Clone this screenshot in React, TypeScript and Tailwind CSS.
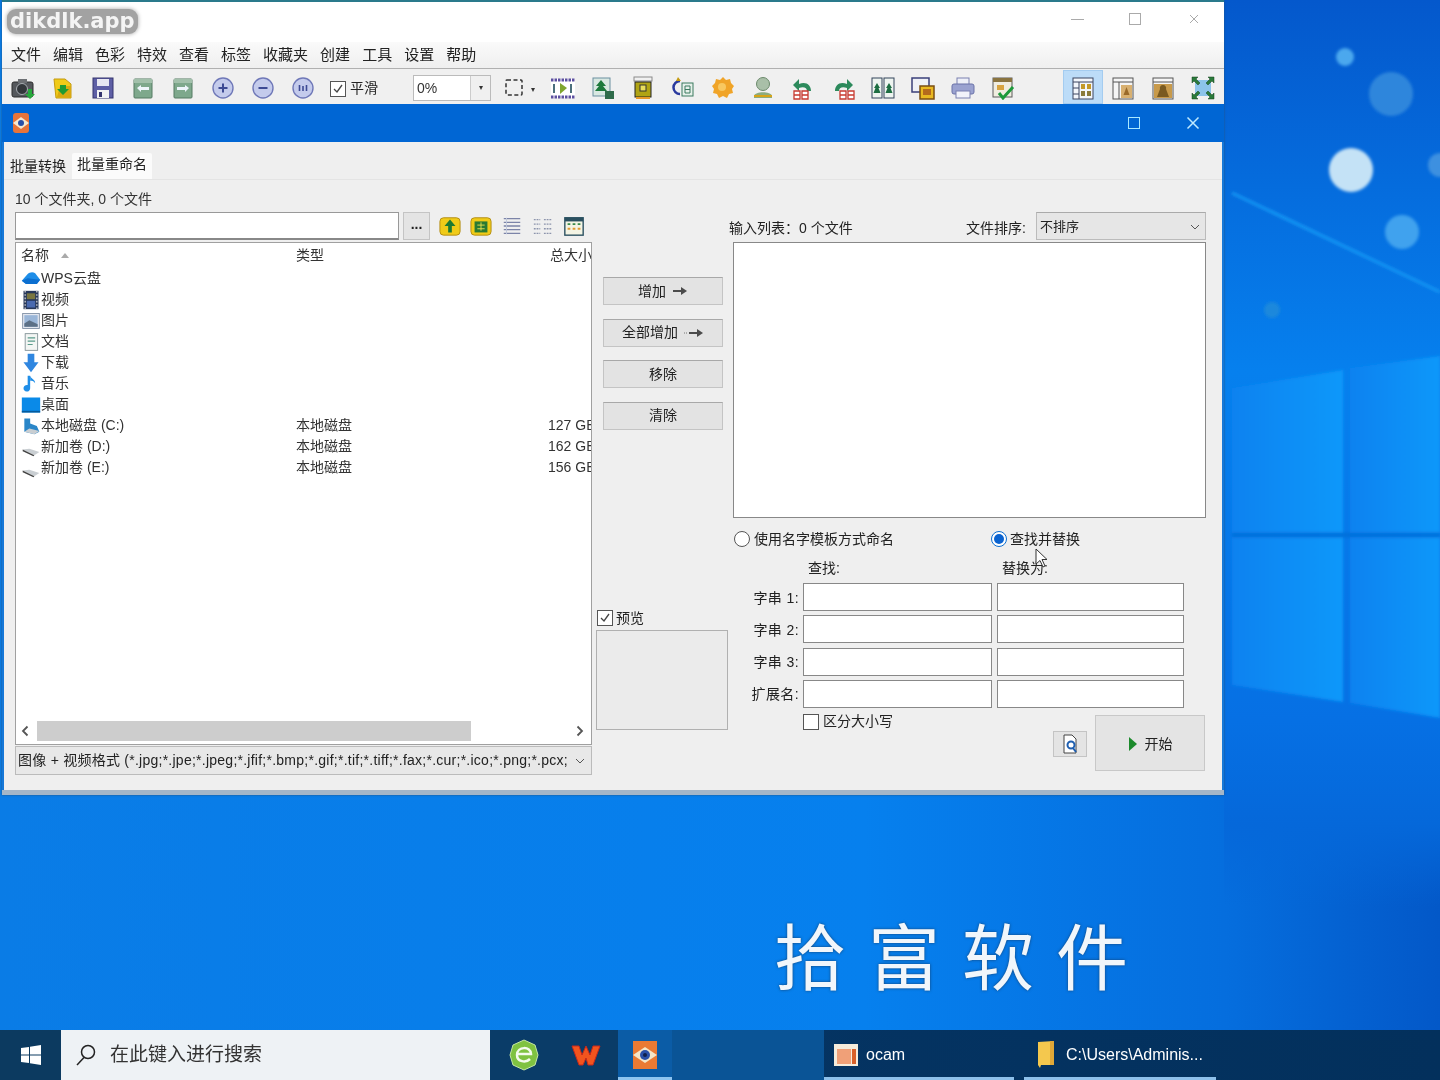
import type { ReactNode } from "react";

const cjk = "font-['Liberation_Sans','Noto_Sans_CJK_SC',sans-serif]";

function Ico({ children, size = 24 }: { children: ReactNode; size?: number }) {
  return (
    <svg width={size} height={size} viewBox="0 0 24 24" className="shrink-0">
      {children}
    </svg>
  );
}

const toolbarLeft: ReactNode[] = [
  <Ico key="cam">
    <rect x="1" y="6" width="21" height="15" rx="2" fill="#55585c" stroke="#2c2c2c" />
    <rect x="7" y="3" width="9" height="4" fill="#6d7074" />
    <circle cx="11" cy="13" r="5.500" fill="#33373b" stroke="#a8adb2" />
    <path d="M17 13h4v5h3l-5 5-5-5h3z" fill="#27a83c" />
  </Ico>,
  <Ico key="open">
    <path d="M3 3h11l6 5v14H5z" fill="#f0cb18" stroke="#c49a10" />
    <path d="M6 21l3-11h11v12z" fill="#d9a911" />
    <path d="M9 9h6v4h3l-6 6-6-6h3z" fill="#1f9b32" />
  </Ico>,
  <Ico key="save">
    <rect x="2" y="2" width="20" height="20" fill="#5e5fa5" stroke="#35356e" />
    <rect x="6" y="3" width="12" height="7" fill="#e8e8f2" />
    <rect x="6" y="14" width="12" height="8" fill="#f2f2f2" />
    <rect x="8" y="16" width="3" height="5" fill="#35356e" />
  </Ico>,
  <Ico key="prev">
    <rect x="3" y="3" width="18" height="19" rx="1" fill="#7ea88c" stroke="#557a63" />
    <rect x="3" y="3" width="18" height="4" fill="#a2c0ab" />
    <path d="M6 12l4-3v2h8v3h-8v2z" fill="#eef5fb" />
  </Ico>,
  <Ico key="next">
    <rect x="3" y="3" width="18" height="19" rx="1" fill="#7ea88c" stroke="#557a63" />
    <rect x="3" y="3" width="18" height="4" fill="#a2c0ab" />
    <path d="M18 12l-4-3v2H6v3h8v2z" fill="#eef5fb" />
  </Ico>,
  <Ico key="plus">
    <circle cx="12" cy="12" r="10" fill="#c4cbec" stroke="#6f78b8" strokeWidth="1.400" />
    <path d="M7.500 12h9M12 7.500v9" stroke="#3d4a94" strokeWidth="2" />
  </Ico>,
  <Ico key="minus">
    <circle cx="12" cy="12" r="10" fill="#c4cbec" stroke="#6f78b8" strokeWidth="1.400" />
    <path d="M7.500 12h9" stroke="#3d4a94" strokeWidth="2" />
  </Ico>,
  <Ico key="fit">
    <circle cx="12" cy="12" r="10" fill="#c4cbec" stroke="#6f78b8" strokeWidth="1.400" />
    <path d="M8.500 9v6M12 10v5M15.500 9v6" stroke="#3d4a94" strokeWidth="1.600" />
  </Ico>,
];

const toolbarMid: ReactNode[] = [
  <Ico key="film">
    <rect x="0" y="3" width="24" height="19" fill="#fff" />
    <path d="M0 4h24M0 21h24" stroke="#5c4fa0" strokeWidth="3" strokeDasharray="2.500 1" />
    <path d="M9 7l7 5-7 6z" fill="#7fa52e" />
    <path d="M3 8v9M20 8v9" stroke="#4b6f7c" strokeWidth="2" />
  </Ico>,
  <Ico key="tree">
    <rect x="2" y="2" width="17" height="18" fill="#d9e8e2" stroke="#6b8fa0" />
    <path d="M10 4l5 6h-3l4 5H4l4-5H5z" fill="#1d7a3c" />
    <rect x="14" y="15" width="9" height="8" fill="#2f6b4a" />
  </Ico>,
  <Ico key="crop">
    <rect x="3" y="1" width="18" height="4" fill="#f0f0f0" stroke="#8a8a8a" />
    <rect x="4" y="6" width="16" height="15" fill="#b0a414" stroke="#222" />
    <rect x="9" y="9" width="6" height="6" fill="#e8de5c" stroke="#333" />
    <path d="M5 22h14" stroke="#e69a2a" strokeWidth="2" />
  </Ico>,
  <Ico key="text">
    <path d="M9 5a5 5 0 1 0 0 13" fill="none" stroke="#2a3a9e" strokeWidth="2.500" />
    <rect x="11" y="7" width="11" height="13" fill="#e7f0ea" stroke="#3b7a5e" />
    <path d="M14 10h5v7h-5zM14 13.500h5" fill="none" stroke="#3b7a5e" />
    <path d="M7 1l3 4H5z" fill="#c49a10" />
  </Ico>,
  <Ico key="sun">
    <path d="M12 1l3 3 4-1 1 4 3 3-2 3 1 4-4 1-2 4-4-2-4 2-2-4-4-1 1-4-2-3 3-3 1-4 4 1z" fill="#f0a428" />
    <circle cx="11" cy="11" r="4" fill="#f8c860" />
  </Ico>,
  <Ico key="user">
    <circle cx="12" cy="8" r="6.500" fill="#a9bfa8" stroke="#6c8a6c" />
    <path d="M3 20c1-5 17-5 18 0v2H3z" fill="#8cab7e" />
    <path d="M3 20h18" stroke="#d8a418" strokeWidth="2" />
  </Ico>,
  <Ico key="rotl">
    <path d="M8 8c7-3 12 1 12 7h-4c0-3-3-5-8-3v3L2 9l6-6z" fill="#2c8a5c" />
    <path d="M3 15h6v8H3zM11 15h6v8h-6zM3 19h6M11 19h6" fill="#fff" stroke="#c83a30" strokeWidth="1.300" />
  </Ico>,
  <Ico key="rotr">
    <path d="M16 8C9 5 4 9 4 15h4c0-3 3-5 8-3v3l6-6-6-6z" fill="#2c8a5c" />
    <path d="M9 15h6v8H9zM17 15h6v8h-6zM9 19h6M17 19h6" fill="#fff" stroke="#c83a30" strokeWidth="1.300" />
  </Ico>,
  <Ico key="compare">
    <rect x="1" y="2" width="10" height="20" fill="#eef4f0" stroke="#33445a" />
    <rect x="13" y="2" width="10" height="20" fill="#eef4f0" stroke="#33445a" />
    <path d="M6 7l3 5H7.500l2 5h-7l2-5H3zM18 7l3 5h-1.500l2 5h-7l2-5H15z" fill="#1d6e42" />
  </Ico>,
  <Ico key="slides">
    <rect x="1" y="2" width="17" height="14" fill="#eef0f6" stroke="#3a3f7a" strokeWidth="1.500" />
    <rect x="9" y="10" width="14" height="13" fill="#e9b820" stroke="#7a4e12" strokeWidth="1.500" />
    <rect x="12" y="13" width="8" height="6" fill="#b56a1c" />
  </Ico>,
  <Ico key="print">
    <rect x="6" y="2" width="12" height="7" fill="#eef0f8" stroke="#7a80b0" />
    <rect x="1" y="8" width="22" height="10" rx="2" fill="#9aa2d0" stroke="#6a72a8" />
    <rect x="5" y="15" width="14" height="7" fill="#f2f3fa" stroke="#7a80b0" />
  </Ico>,
  <Ico key="check">
    <rect x="2" y="2" width="19" height="19" fill="#f0ede0" stroke="#5a5a5a" />
    <rect x="2" y="2" width="19" height="4" fill="#8a7440" />
    <rect x="6" y="9" width="7" height="5" fill="#d8a440" />
    <path d="M8 17l4 5 10-11" fill="none" stroke="#1d9a3a" strokeWidth="3" />
  </Ico>,
];

const toolbarRight: ReactNode[] = [
  <Ico key="v1">
    <rect x="2" y="2" width="20" height="21" fill="#f3f6fb" stroke="#3a4560" />
    <path d="M2 6h20M8 6v17M2 12h6M2 18h6" stroke="#3a4560" />
    <rect x="10" y="8" width="4" height="5" fill="#c49a2a" />
    <rect x="16" y="8" width="4" height="5" fill="#c49a2a" />
    <rect x="10" y="15" width="4" height="5" fill="#8a7a3a" />
    <rect x="16" y="15" width="4" height="5" fill="#8a7a3a" />
  </Ico>,
  <Ico key="v2">
    <rect x="2" y="2" width="20" height="21" fill="#f5f5f5" stroke="#555" />
    <path d="M2 6h20M8 6v17" stroke="#555" />
    <rect x="10" y="9" width="11" height="13" fill="#d8b070" />
    <path d="M15.500 11l3 8h-6z" fill="#9a6a2a" />
  </Ico>,
  <Ico key="v3">
    <rect x="2" y="2" width="20" height="21" fill="#f5f5f5" stroke="#555" />
    <path d="M2 6h20" stroke="#555" />
    <rect x="3" y="8" width="18" height="14" fill="#c89a4a" />
    <path d="M12 9a3 3 0 0 1 3 4l3 8H6l3-8a3 3 0 0 1 3-4z" fill="#7a5a20" />
  </Ico>,
  <Ico key="full">
    <rect x="4" y="4" width="16" height="16" fill="#8cc4ea" />
    <path d="M1 1h6l-2 2 4 4-2 2-4-4-2 2zM23 1h-6l2 2-4 4 2 2 4-4 2 2zM1 23h6l-2-2 4-4-2-2-4 4-2-2zM23 23h-6l2-2-4-4 2-2 4 4 2-2z" fill="#2a7a3a" stroke="#14401e" strokeWidth=".5" />
  </Ico>,
];

function Slot({ children }: { children: ReactNode }) {
  return <div className="flex h-[34px] w-[40px] shrink-0 items-center justify-center pt-[1px]">{children}</div>;
}

function CheckBox({ checked = false }: { checked?: boolean }) {
  return (
    <span className="flex h-[16px] w-[16px] shrink-0 items-center justify-center border border-[#555] bg-white">
      {checked && (
        <svg width="12" height="12" viewBox="0 0 12 12">
          <path d="M2 6l3 3 5-7" fill="none" stroke="#444" strokeWidth="1.300" />
        </svg>
      )}
    </span>
  );
}

function Radio({ checked = false }: { checked?: boolean }) {
  return (
    <span
      className={`flex h-[16px] w-[16px] shrink-0 items-center justify-center rounded-full border bg-white ${
        checked ? "border-[#0a6ed1]" : "border-[#555]"
      }`}
    >
      {checked && <span className="h-[10px] w-[10px] rounded-full bg-[#0a63d0]" />}
    </span>
  );
}

function Chevron({ className = "" }: { className?: string }) {
  return (
    <svg width="10" height="6" viewBox="0 0 10 6" className={className}>
      <path d="M1 1l4 4 4-4" fill="none" stroke="#555" />
    </svg>
  );
}

function Arrow({ tail = false }: { tail?: boolean }) {
  return (
    <svg width={tail ? 20 : 16} height="10" viewBox={tail ? "-4 0 20 10" : "0 0 16 10"}>
      {tail && <path d="M-4 5h4" stroke="#777" strokeDasharray="1 1" />}
      <path d="M1 4h8V1l6 4-6 4V6H1z" fill="#4b4b4b" />
    </svg>
  );
}

function ActionButton({ label, arrow = false, tail = false }: { label: string; arrow?: boolean; tail?: boolean }) {
  return (
    <div className="flex h-[28px] w-[120px] items-center justify-center gap-[6px] border border-[#c4c4c4] border-t-[#a8a8a8] bg-[#e3e3e3] text-[14px] text-[#222]">
      <span>{label}</span>
      {arrow && <Arrow tail={tail} />}
    </div>
  );
}

const places: { label: string; icon: ReactNode; type?: string; size?: string }[] = [
  {
    label: "WPS云盘",
    icon: (
      <Ico size={20}>
        <path d="M1 14l7-8c2-2 6-3 9-1l6 8-4 5H6z" fill="#1f8ee8" />
        <path d="M1 14l7-3 7 1 8 1-4 5H6z" fill="#0c6fd0" />
      </Ico>
    ),
  },
  {
    label: "视频",
    icon: (
      <Ico size={20}>
        <rect x="3" y="1" width="18" height="22" fill="#28385a" />
        <rect x="7" y="4" width="10" height="7" fill="#7a7640" />
        <rect x="7" y="13" width="10" height="8" fill="#4a6ab0" />
        <path d="M5 1v22M19 1v22" stroke="#d6d6d6" strokeWidth="1.500" strokeDasharray="2 2" />
      </Ico>
    ),
  },
  {
    label: "图片",
    icon: (
      <Ico size={20}>
        <rect x="2" y="3" width="20" height="18" fill="#e4e8f0" stroke="#7a8aa0" />
        <rect x="4" y="5" width="16" height="14" fill="#9ab6d8" />
        <path d="M4 15l6-4 10 5v3H4z" fill="#5c7086" />
      </Ico>
    ),
  },
  {
    label: "文档",
    icon: (
      <Ico size={20}>
        <rect x="5" y="2" width="15" height="20" fill="#f3f6f4" stroke="#7a8a90" />
        <path d="M8 7h9M8 11h9M8 15h6" stroke="#5a9a8a" strokeWidth="1.400" />
      </Ico>
    ),
  },
  {
    label: "下载",
    icon: (
      <Ico size={20}>
        <path d="M8 1h8v10h5l-9 12-9-12h5z" fill="#2f86e0" />
      </Ico>
    ),
  },
  {
    label: "音乐",
    icon: (
      <Ico size={20}>
        <path d="M11 2v15a4 4 0 1 1-3-3.800V2z" fill="#1f8ee8" />
        <path d="M11 2c1 4 6 4 6 9-2-3-4-3-6-3z" fill="#1f8ee8" />
      </Ico>
    ),
  },
  {
    label: "桌面",
    icon: (
      <Ico size={20}>
        <rect x="1" y="3" width="22" height="18" fill="#0a8ae8" />
        <rect x="1" y="19" width="22" height="2" fill="#055a9c" />
      </Ico>
    ),
  },
  {
    label: "本地磁盘 (C:)",
    type: "本地磁盘",
    size: "127 GB",
    icon: (
      <Ico size={20}>
        <path d="M4 3h7v6l8 3 3 7-6 3-12-3z" fill="#2a86c8" />
        <path d="M10 15l12 3-6 4-12-3z" fill="#c9ced2" />
      </Ico>
    ),
  },
  {
    label: "新加卷 (D:)",
    type: "本地磁盘",
    size: "162 GB",
    icon: (
      <Ico size={20}>
        <path d="M2 15l8-1 12 4-6 4z" fill="#c9ced2" />
        <path d="M2 15l14 7-1 1L2 17z" fill="#444" />
      </Ico>
    ),
  },
  {
    label: "新加卷 (E:)",
    type: "本地磁盘",
    size: "156 GB",
    icon: (
      <Ico size={20}>
        <path d="M2 15l8-1 12 4-6 4z" fill="#c9ced2" />
        <path d="M2 15l14 7-1 1L2 17z" fill="#444" />
      </Ico>
    ),
  },
];

const replaceRows = ["字串 1:", "字串 2:", "字串 3:", "扩展名:"];

function Wallpaper() {
  return (
    <svg className="absolute inset-0" width="1440" height="1030" viewBox="0 0 1440 1030">
      <defs>
        <linearGradient id="base" x1="0" x2="1" y1="0" y2="0">
          <stop offset="0" stopColor="#0a7ce6" />
          <stop offset="0.6" stopColor="#0680ee" />
          <stop offset="0.85" stopColor="#056ede" />
          <stop offset="1" stopColor="#0358c8" />
        </linearGradient>
        <linearGradient id="side" x1="0" x2="0" y1="0" y2="1">
          <stop offset="0" stopColor="#0458cc" />
          <stop offset="0.36" stopColor="#0680ee" />
          <stop offset="0.7" stopColor="#0670e4" />
          <stop offset="0.8" stopColor="#0568da" />
          <stop offset="0.88" stopColor="#0568da" stopOpacity="0" />
        </linearGradient>
        <linearGradient id="pane" x1="0" x2="1" y1="0" y2="0">
          <stop offset="0" stopColor="#0a82f0" />
          <stop offset="1" stopColor="#0a98fa" />
        </linearGradient>
        <filter id="soft">
          <feGaussianBlur stdDeviation="1.500" />
        </filter>
      </defs>
      <rect width="1440" height="1030" fill="url(#base)" />
      <rect x="1224" width="216" height="1030" fill="url(#side)" />
      <g filter="url(#soft)">
        <path d="M1232 388L1343 370V702L1232 685z" fill="url(#pane)" />
        <path d="M1350 368L1440 356V718L1350 703z" fill="url(#pane)" />
        <path d="M1232 535H1440" stroke="#0670dc" strokeWidth="5" />
        <path d="M1232 193L1440 292" stroke="#1296f4" strokeWidth="3" />
        <circle cx="1345" cy="57" r="9" fill="#4ba8ee" />
        <circle cx="1391" cy="94" r="22" fill="#2f86dc" />
        <circle cx="1351" cy="170" r="22" fill="#c4e2f6" />
        <circle cx="1402" cy="232" r="17" fill="#40a2ee" />
        <circle cx="1272" cy="310" r="8" fill="#1a88dc" />
        <circle cx="1440" cy="165" r="12" fill="#3c90e0" />
      </g>
    </svg>
  );
}

function Taskbar() {
  return (
    <div className="flex h-[50px] shrink-0 items-stretch bg-gradient-to-r from-[#07386a] to-[#03305c] text-white">
      <div className="flex w-[61px] items-center justify-center bg-[#0c3a60]">
        <svg width="22" height="22" viewBox="0 0 22 22">
          <path d="M1 4l8-1v7.500H1zM10 2.800L21 1v9.500H10zM1 11.500h8V19l-8-1zM10 11.500h11V21l-11-1.700z" fill="#fff" />
        </svg>
      </div>
      <div className="flex w-[429px] items-center gap-[13px] bg-[#eef2f5] pl-[14px] text-[19px] text-[#333]">
        <svg width="22" height="24" viewBox="0 0 22 24">
          <circle cx="13" cy="9" r="6.500" fill="none" stroke="#222" strokeWidth="1.500" />
          <path d="M9 14.500L2 22" stroke="#222" strokeWidth="1.500" />
        </svg>
        <span>在此键入进行搜索</span>
      </div>
      <div className="flex w-[128px] items-center bg-[#0a3c68]">
        <div className="flex w-[68px] justify-center">
          <svg width="30" height="32" viewBox="0 0 30 32">
            <path d="M15 1l11 5 3 10-3 10-11 5-11-5-3-10 3-10z" fill="#7fc241" stroke="#c4e6a4" />
            <path d="M8 15h14c0-8-14-8-14 1 0 7 9 8 13 4" fill="none" stroke="#f4faee" strokeWidth="2.500" />
          </svg>
        </div>
        <div className="flex w-[56px] justify-center">
          <svg width="30" height="24" viewBox="0 0 30 24">
            <path d="M1 3h7l3 9 4-9 4 9 3-9h7l-7 19h-5l-2-7-3 7H8z" fill="#f2541e" stroke="#c8281a" />
          </svg>
        </div>
      </div>
      <div className="flex w-[54px] items-center justify-center border-b-[3px] border-[#8ec4f0] bg-[#0b5ca6] pt-[3px]">
        <svg width="28" height="30" viewBox="0 0 28 30">
          <rect x="2" y="1" width="24" height="28" fill="#ea7a34" />
          <path d="M2 15l12-8 12 8-12 8z" fill="#f4e6c8" />
          <circle cx="14" cy="15" r="5" fill="#2a50a8" />
          <circle cx="14" cy="15" r="2" fill="#10204c" />
        </svg>
      </div>
      <div className="w-[152px] bg-[#0a5496]" />
      <div className="flex w-[190px] items-center gap-[7px] border-b-[3px] border-[#8ec0ea] pl-[9px] pt-[3px] text-[16px]">
        <svg width="26" height="24" viewBox="0 0 26 24">
          <rect x="1" y="1" width="24" height="22" fill="#f6ecdc" />
          <rect x="4" y="6" width="14" height="15" fill="#f0a078" />
          <rect x="19" y="6" width="4" height="15" fill="#d8602a" />
        </svg>
        <span>ocam</span>
      </div>
      <div className="w-[10px]" />
      <div className="flex w-[192px] items-center gap-[10px] border-b-[3px] border-[#8ec0ea] pl-[12px] pt-[3px] text-[16px]">
        <svg width="20" height="30" viewBox="0 0 20 30">
          <path d="M2 2l16-1v24H5l-1 3-2-3z" fill="#f4c84e" />
          <path d="M14 1h4v24h-4z" fill="#e0a838" />
        </svg>
        <span className="whitespace-nowrap">C:\Users\Adminis...</span>
      </div>
    </div>
  );
}

export default function App() {
  return (
    <div className={`flex h-[1080px] w-[1440px] flex-col overflow-hidden blur-[0.5px] ${cjk}`}>
      <div className="relative h-[1030px] shrink-0">
        <Wallpaper />

        <div className="absolute left-[774px] top-[917px] flex gap-[22px] text-[72px] font-normal leading-[84px] text-[#f1f6fb] [text-shadow:0_0_3px_#16406e]">
          <span>拾</span>
          <span>富</span>
          <span>软</span>
          <span>件</span>
        </div>

        <div className="absolute left-[2px] top-0 flex h-[795px] w-[1222px] flex-col border-b-[5px] border-[#a4b6c8] bg-[#f0f0f0] shadow-[0_0_2px_#24527c]">
          {/* outer app window */}
          <div className="flex h-[42px] shrink-0 items-start justify-between border-t-2 border-[#2a7a8c] bg-white">
            <span className="ml-[5px] mt-[7px] rounded-[9px] bg-[#a2a2a2] px-[3px] font-['DejaVu_Sans',sans-serif] text-[21px] font-bold leading-[25px] text-[#f4f4f4] shadow-[0_0_4px_#a2a2a2]">
              dikdlk.app
            </span>
            <div className="flex items-center pr-[25px] pt-[11px]">
              <span className="mr-[45px] h-px w-[13px] bg-[#aaa]" />
              <span className="mr-[48px] h-[12px] w-[12px] border border-[#aaa]" />
              <svg width="10" height="10" viewBox="0 0 10 10">
                <path d="M1 1l8 8M9 1L1 9" stroke="#aaa" />
              </svg>
            </div>
          </div>

          <div className="flex h-[26px] shrink-0 items-center gap-[12px] bg-gradient-to-b from-[#fafafa] to-[#efefef] pb-[2px] pl-[9px] text-[15px] text-[#222]">
            {["文件", "编辑", "色彩", "特效", "查看", "标签", "收藏夹", "创建", "工具", "设置", "帮助"].map((m) => (
              <span key={m} className="leading-none">
                {m}
              </span>
            ))}
          </div>

          <div className="flex h-[36px] shrink-0 items-end overflow-hidden border-t border-[#b0b0b0] bg-[#f0f0f0] pl-px">
            {toolbarLeft.map((icon, i) => (
              <Slot key={i}>{icon}</Slot>
            ))}
            <div className="mb-[5px] ml-[7px] flex shrink-0 items-center gap-[4px] whitespace-nowrap text-[14px] text-[#222]">
              <CheckBox checked />
              <span>平滑</span>
            </div>
            <div className="mb-[3px] ml-[35px] flex h-[26px] w-[78px] shrink-0 items-center justify-between border border-[#bbb] bg-white pl-[3px] text-[14px] text-[#333]">
              <span>0%</span>
              <span className="flex h-full w-[20px] items-center justify-center border-l border-[#ccc] bg-[#f0f0f0] text-[8px]">▾</span>
            </div>
            <svg width="18" height="17" viewBox="0 0 18 17" className="mb-[8px] ml-[14px] shrink-0">
              <rect x="1" y="1" width="16" height="15" rx="1" fill="none" stroke="#333" strokeWidth="1.500" strokeDasharray="4 2.500" />
            </svg>
            <span className="mb-[8px] ml-[8px] w-[12px] shrink-0 text-[8px] text-[#333]">▾</span>
            <div className="flex shrink-0">
              {toolbarMid.map((icon, i) => (
                <Slot key={i}>{icon}</Slot>
              ))}
            </div>
            <div className="ml-[40px] flex shrink-0">
              {toolbarRight.map((icon, i) => (
                <div key={i} className={i === 0 ? "bg-[#bcdcf8] shadow-[inset_0_0_0_1px_#a4ccf0]" : ""}>
                  <Slot>{icon}</Slot>
                </div>
              ))}
            </div>
          </div>

          {/* inner dialog */}
          <div className="flex h-[38px] shrink-0 items-center justify-between bg-[#0066d4] pl-[9px] pr-[24px]">
            <svg width="20" height="22" viewBox="0 0 20 22">
              <rect x="2" y="1" width="16" height="20" rx="3" fill="#e8743a" />
              <path d="M2 11l8-6 8 6-8 6z" fill="#f6e8d0" />
              <circle cx="10" cy="11" r="3" fill="#2a50a8" />
            </svg>
            <div className="flex items-center gap-[46px]">
              <span className="h-[12px] w-[12px] border-[1.5px] border-[#a8e8ff]" />
              <svg width="14" height="14" viewBox="0 0 14 14">
                <path d="M1.500 1.500l11 11M12.500 1.500l-11 11" stroke="#bfeaff" strokeWidth="1.500" />
              </svg>
            </div>
          </div>

          <div className="flex min-h-0 flex-1 flex-col border-x-2 border-[#1678d8] bg-[#efefef] text-[14px] text-[#222]">
            <div className="flex h-[38px] shrink-0 items-end gap-[6px] border-b border-[#e4e4e4] pl-[6px]">
              <span className="pb-[2px]">批量转换</span>
              <span className="flex h-[26px] items-center rounded-t-[2px] bg-[#fbfbfb] px-[5px] pb-[4px]">批量重命名</span>
            </div>

            <div className="flex min-h-0 flex-1 pl-[11px] pt-[8px]">
              {/* left column */}
              <div className="flex w-[577px] shrink-0 flex-col">
                <div className="mb-[2px] flex h-[22px] items-center whitespace-nowrap text-[#333]">10 个文件夹, 0 个文件</div>
                <div className="flex h-[28px] shrink-0 items-center">
                  <div className="h-full w-[384px] border border-[#999] border-b-2 border-b-[#888] bg-white" />
                  <div className="ml-[4px] flex h-full w-[27px] items-center justify-center border border-[#c4c4c4] bg-[#e4e4e4] pb-[4px] font-bold leading-none">...</div>
                  <div className="ml-[9px] flex items-center gap-[9px]">
                    <Ico size={22}>
                      <rect x="1" y="3" width="22" height="19" rx="4" fill="#f0cb18" stroke="#b08a10" />
                      <path d="M12 5l6 7h-4v7h-4v-7H6z" fill="#1d7a32" />
                    </Ico>
                    <Ico size={22}>
                      <rect x="1" y="3" width="22" height="19" rx="4" fill="#f0cb18" stroke="#b08a10" />
                      <rect x="5" y="7" width="14" height="12" fill="#2a7a32" />
                      <path d="M8 11h8M8 15h8M12 8v9" stroke="#e8e050" />
                    </Ico>
                    <Ico size={22}>
                      <path d="M3 4h18M3 8h18M3 12h18M3 16h18M3 20h18" stroke="#7c84a8" strokeWidth="1.500" />
                      <path d="M6 3v18" stroke="#c0c8dc" />
                    </Ico>
                    <Ico size={22}>
                      <path d="M2 5h7M13 5h9M2 10h7M13 10h9M2 15h7M13 15h9M2 20h7M13 20h9" stroke="#8c94ac" strokeWidth="1.500" strokeDasharray="2 1" />
                    </Ico>
                    <Ico size={22}>
                      <rect x="2" y="3" width="20" height="19" fill="#f4f4e4" stroke="#2a5060" strokeWidth="1.500" />
                      <rect x="2" y="3" width="20" height="4" fill="#2a5060" />
                      <path d="M5 10h3M10.500 10h3M16 10h3" stroke="#3a8a4a" strokeWidth="2" />
                      <path d="M5 15h3M10.500 15h3M16 15h3" stroke="#e09a30" strokeWidth="2" />
                    </Ico>
                  </div>
                </div>

                <div className="mt-[2px] flex h-[503px] shrink-0 flex-col border border-[#a0a0a0] bg-white pt-[1px]">
                  <div className="flex h-[22px] items-center overflow-hidden text-[14px] text-[#333]">
                    <span className="flex w-[280px] shrink-0 items-center gap-[12px] pl-[5px]">
                      名称
                      <svg width="8" height="5" viewBox="0 0 8 5">
                        <path d="M4 0l4 5H0z" fill="#aaa" />
                      </svg>
                    </span>
                    <span className="w-[254px] shrink-0">类型</span>
                    <span className="whitespace-nowrap">总大小</span>
                  </div>
                  <div className="flex flex-col pt-[2px]">
                    {places.map((p) => (
                      <div key={p.label} className="flex h-[21px] items-center overflow-hidden text-[#333]">
                        <span className="flex w-[280px] shrink-0 items-center whitespace-nowrap pl-[5px]">
                          {p.icon}
                          {p.label}
                        </span>
                        <span className="w-[252px] shrink-0">{p.type}</span>
                        <span className="whitespace-nowrap">{p.size}</span>
                      </div>
                    ))}
                  </div>
                  <div className="mb-[3px] mt-auto flex h-[20px] items-center pl-[5px] pr-[7px]">
                    <svg width="8" height="12" viewBox="0 0 8 12">
                      <path d="M6.500 1.500L2 6l4.500 4.500" fill="none" stroke="#555" strokeWidth="1.800" />
                    </svg>
                    <div className="ml-[8px] h-full w-[434px] bg-[#cdcdcd]" />
                    <div className="flex-1" />
                    <svg width="8" height="12" viewBox="0 0 8 12">
                      <path d="M1.500 1.500L6 6l-4.500 4.500" fill="none" stroke="#555" strokeWidth="1.800" />
                    </svg>
                  </div>
                </div>

                <div className="mt-[1px] flex h-[29px] shrink-0 items-center border border-[#bbb] bg-[#e8e8e8] pl-[2px] pr-[6px]">
                  <span className="min-w-0 flex-1 overflow-hidden whitespace-nowrap tracking-[0.25px]">图像 + 视频格式 (*.jpg;*.jpe;*.jpeg;*.jfif;*.bmp;*.gif;*.tif;*.tiff;*.fax;*.cur;*.ico;*.png;*.pcx;</span>
                  <Chevron className="ml-[6px] shrink-0" />
                </div>
              </div>

              {/* middle column */}
              <div className="ml-[4px] flex w-[132px] shrink-0 flex-col">
                <div className="ml-[7px] mt-[89px] flex flex-col gap-[13.5px]">
                  <ActionButton label="增加" arrow />
                  <ActionButton label="全部增加" arrow tail />
                  <ActionButton label="移除" />
                  <ActionButton label="清除" />
                </div>
                <div className="mt-[178.5px] flex h-[20px] items-center gap-[3px] pl-px">
                  <CheckBox checked />
                  <span>预览</span>
                </div>
                <div className="mt-[2px] h-[100px] w-[132px] border border-[#b0b0b0] bg-[#ebebeb]" />
              </div>

              {/* right column */}
              <div className="ml-[5px] flex w-[473px] shrink-0 flex-col">
                <div className="flex h-[54px] shrink-0 items-start pt-[24px]">
                  <span className="ml-[-4px] mt-[6px] w-[237px] whitespace-nowrap">输入列表：0 个文件</span>
                  <span className="mt-[6px] whitespace-nowrap">文件排序:</span>
                  <div className="ml-auto flex h-[28px] w-[170px] items-center justify-between border border-[#bbb] border-t-[#aaa] bg-[#e6e6e6] pl-[3px] pr-[5px] pt-[1px] text-[13px]">
                    <span>不排序</span>
                    <Chevron />
                  </div>
                </div>
                <div className="h-[276px] shrink-0 border border-[#888] bg-white" />

                <div className="mt-[12px] flex h-[18px] shrink-0 items-center pl-px">
                  <div className="flex w-[257px] items-center gap-[4px]">
                    <Radio />
                    <span className="whitespace-nowrap">使用名字模板方式命名</span>
                  </div>
                  <div className="relative flex items-center gap-[3px]">
                    <Radio checked />
                    <span className="whitespace-nowrap">查找并替换</span>
                    <svg width="14" height="21" viewBox="0 0 14 21" className="absolute left-[44px] top-[19px]">
                      <path d="M1 1v15l4-3.500 3 6.500 2-1-3-6.500h5z" fill="#fff" stroke="#333" />
                    </svg>
                  </div>
                </div>

                <div className="mt-[11px] flex h-[18px] shrink-0 items-center">
                  <span className="ml-[75px] w-[194px]">查找:</span>
                  <span className="whitespace-nowrap">替换为:</span>
                </div>

                <div className="mt-[6px] flex shrink-0 flex-col gap-[4.3px]">
                  {replaceRows.map((r) => (
                    <div key={r} className="flex h-[28px] items-center">
                      <span className="w-[66px] whitespace-nowrap pt-[2px] text-right tracking-[0.4px]">{r}</span>
                      <div className="ml-[4px] h-full w-[189px] border border-[#888] bg-white" />
                      <div className="ml-[5px] h-full w-[187px] border border-[#888] bg-white" />
                    </div>
                  ))}
                </div>

                <div className="flex">
                  <div className="ml-[70px] mt-[6px] flex h-[16px] items-center gap-[4px]">
                    <CheckBox />
                    <span className="whitespace-nowrap">区分大小写</span>
                  </div>
                  <div className="ml-auto mr-[1px] mt-[7px] flex items-start">
                    <div className="mr-[8px] mt-[16px] flex h-[26px] w-[34px] items-center justify-center border border-[#c4c4c4] bg-[#e4e4e4]">
                      <svg width="18" height="20" viewBox="0 0 18 20">
                        <path d="M3 1h8l4 4v14H3z" fill="#fff" stroke="#444" />
                        <circle cx="10" cy="11" r="3.500" fill="none" stroke="#1f5fb0" strokeWidth="2" />
                        <path d="M12 14l3 4" stroke="#1f5fb0" strokeWidth="2" />
                      </svg>
                    </div>
                    <div className="flex h-[56px] w-[110px] items-center justify-center gap-[7px] border border-[#c8c8c8] bg-[#e4e4e4] pt-[3px]">
                      <svg width="10" height="16" viewBox="0 0 10 16">
                        <path d="M1 1l8 7-8 7z" fill="#1c8a2c" />
                      </svg>
                      <span>开始</span>
                    </div>
                  </div>
                </div>
              </div>
            </div>
          </div>
        </div>
      </div>
      <Taskbar />
    </div>
  );
}
